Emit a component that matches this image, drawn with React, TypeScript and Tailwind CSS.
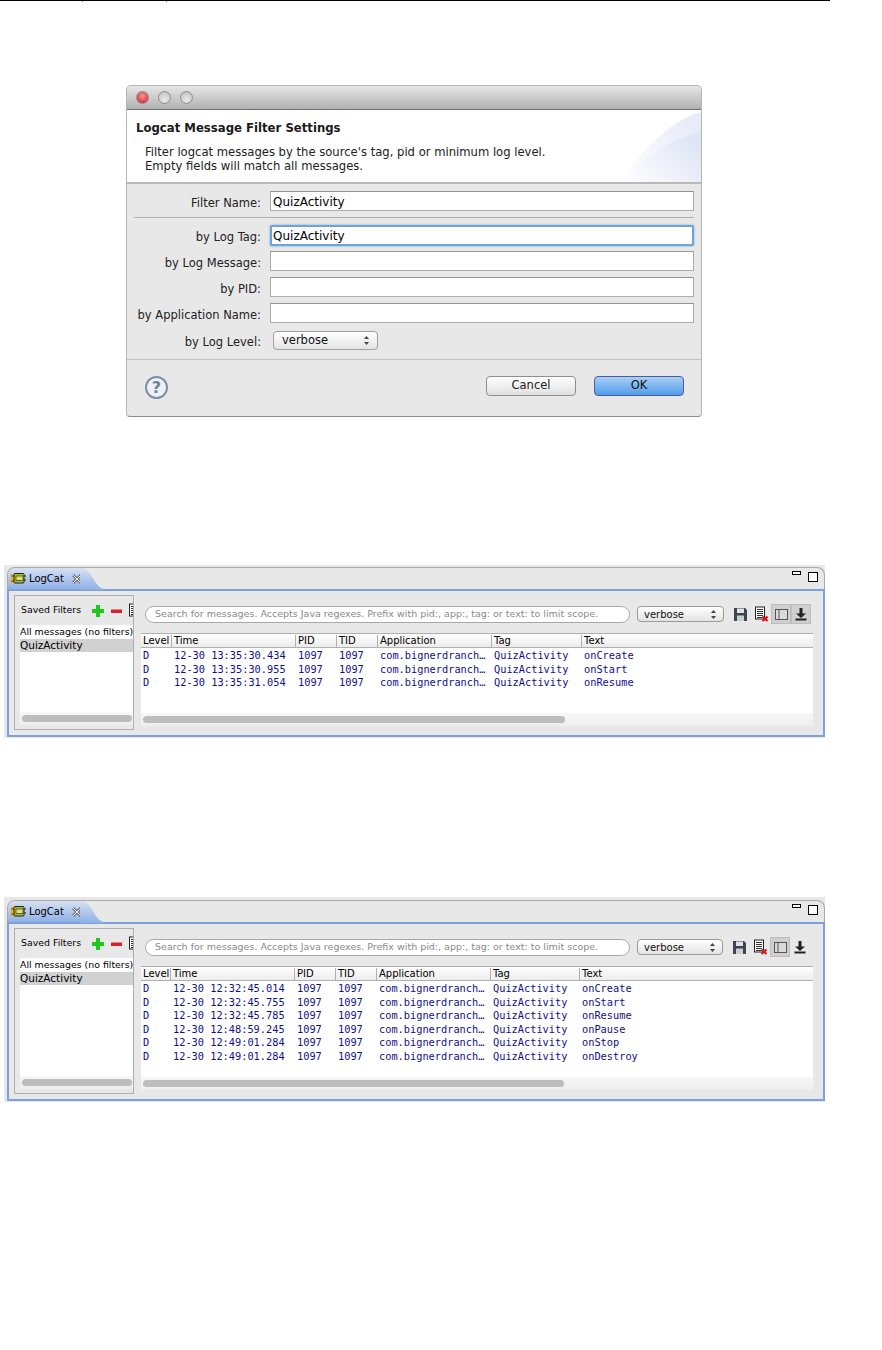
import React from "react";

const sans = "font-['DejaVu_Sans',sans-serif]";
const mono = "font-['DejaVu_Sans_Mono',monospace]";

const Stepper = () => (
    <svg width="7" height="11" viewBox="0 0 7 11" className="shrink-0">
        <path d="M3.5 1 L6 4 H1 Z M3.5 10 L6 7 H1 Z" fill="#444" />
    </svg>
);

const Swoosh = () => (
    <svg width="100" height="72" viewBox="0 0 100 72" className="absolute right-0 top-0">
        <defs>
            <linearGradient id="sw1" x1="0" y1="1" x2="1" y2="0.3">
                <stop offset="0" stopColor="#ffffff" />
                <stop offset="1" stopColor="#dfe5f5" />
            </linearGradient>
            <linearGradient id="sw2" x1="0" y1="1" x2="1" y2="0.4">
                <stop offset="0" stopColor="#ffffff" />
                <stop offset="1" stopColor="#e8ecf8" />
            </linearGradient>
        </defs>
        <path d="M20 72 C40 40 70 10 100 2 V72 Z" fill="url(#sw2)" />
        <path d="M20 72 C45 45 75 27 100 22 V72 Z" fill="url(#sw1)" />
    </svg>
);

const Light = ({ color }: { color: string }) => (
    <span className={`w-[13px] h-[13px] rounded-full border border-[#8f8f8f] ${color}`} />
);

const Field = ({ label, value, focus }: { label: string; value?: string; focus?: boolean }) => (
    <div className="flex items-center">
        <label className="w-[134px] pt-[3px] leading-[14px] text-right text-[11.5px] text-[#222]">{label}</label>
        {focus ? (
            <div className="ml-[9px] flex-1 h-[21px] bg-white rounded-[2px] border-2 border-[#6aa6d8] shadow-[0_0_2px_#5b9bd5] pl-[1px] flex items-center text-[12px] text-black">
                {value}
            </div>
        ) : (
            <div className="ml-[9px] flex-1 h-5 bg-white border border-[#adadad] border-t-[#949494] pl-[2px] pt-[1px] flex items-center text-[12px] text-black">
                {value}
            </div>
        )}
    </div>
);

const Dialog = () => (
    <div className={`${sans} w-[576px] h-[332px] ml-[126px] mt-[83px] flex flex-col rounded-t-[5px] rounded-b-[4px] border border-[#b5b5b5] border-b-[#8a8a8a] bg-[#e8e8e8] overflow-hidden`}>
        <div className="h-[24px] shrink-0 flex items-center gap-[9px] pl-[9px] bg-gradient-to-b from-[#e6e6e6] to-[#b2b2b2] border-b border-[#6f6f6f]">
            <Light color="bg-[radial-gradient(circle_at_50%_35%,#f49a9a,#d8141f)]" />
            <Light color="bg-[radial-gradient(circle_at_50%_70%,#ececec,#b9b9b9)]" />
            <Light color="bg-[radial-gradient(circle_at_50%_70%,#ececec,#b9b9b9)]" />
        </div>
        <div className="relative h-[74px] shrink-0 bg-white border-b-2 border-[#b9b9b9] pl-[9px] pt-[10px] text-black overflow-hidden">
            <Swoosh />
            <h1 className="relative text-[11.7px] font-bold leading-[16px] text-[#1a1a1a]">Logcat Message Filter Settings</h1>
            <p className="relative ml-[9px] mt-[9px] text-[11.6px] leading-[14px] text-[#222]">
                Filter logcat messages by the source's tag, pid or minimum log level.
                <br />
                Empty fields will match all messages.
            </p>
        </div>
        <div className="flex flex-col pr-[7px] pt-[7px] shrink-0">
            <Field label="Filter Name:" value="QuizActivity" />
            <div className="ml-[7px] mt-[6px] h-px bg-[#b0b0b0]" />
            <div className="mt-[7px] flex flex-col gap-[5px]">
                <Field label="by Log Tag:" value="QuizActivity" focus />
                <Field label="by Log Message:" />
            </div>
            <div className="mt-[6px] flex flex-col gap-[6px]">
                <Field label="by PID:" />
                <Field label="by Application Name:" />
            </div>
            <div className="flex items-center mt-[8px]">
                <label className="w-[134px] pt-[3px] leading-[14px] text-right text-[11.5px] text-[#222]">by Log Level:</label>
                <div className="ml-[12px] w-[105px] h-[19px] rounded-[4px] border border-[#a0a0a0] bg-gradient-to-b from-white to-[#e4e4e4] pl-2 pr-[7px] flex items-center justify-between text-[11.5px] text-[#111]">
                    verbose
                    <Stepper />
                </div>
            </div>
        </div>
        <div className="mt-[9px] flex-1 border-t border-[#c2c2c2] flex items-start justify-between pt-[16px] pl-[18px] pr-[17px]">
            <div className="w-[23px] h-[23px] rounded-full border-2 border-[#7d8ea6] bg-[#eef0f3] flex items-center justify-center text-[16px] font-bold leading-none text-[#6f83a0]">
                ?
            </div>
            <div className="flex gap-[18px]">
                <button type="button" className="w-[90px] h-[20px] rounded-[4px] border border-[#8f8f8f] bg-gradient-to-b from-white to-[#e0e0e0] text-[11.5px] text-[#222]">
                    Cancel
                </button>
                <button type="button" className="w-[90px] h-[20px] rounded-[4px] border border-[#4c5e9a] bg-gradient-to-b from-[#a8d0f5] to-[#4f9bea] text-[11.5px] text-[#111]">
                    OK
                </button>
            </div>
        </div>
    </div>
);

const ChipIcon = () => (
    <svg width="15" height="11" viewBox="0 0 15 11" className="shrink-0">
        <rect x="0" y="1" width="4" height="9" fill="#d8c020" />
        <path d="M0 3h3M0 8h3" stroke="#d02020" strokeWidth="1" />
        <rect x="3" y="0.5" width="10" height="9.5" rx="1" fill="#a8c428" stroke="#222" />
        <rect x="5" y="3" width="7" height="4.5" fill="#e4e070" stroke="#333" strokeWidth="0.7" />
        <path d="M13 3h2M13 7h2" stroke="#222" />
    </svg>
);

const CloseIcon = () => (
    <svg width="10" height="10" viewBox="0 0 9 9" className="shrink-0">
        <path d="M1 1 L8 8 M8 1 L1 8" stroke="#333" strokeWidth="2.4" />
        <path d="M1 1 L8 8 M8 1 L1 8" stroke="#fff" strokeWidth="1" />
    </svg>
);

const PlusIcon = () => (
    <svg width="12" height="12" viewBox="0 0 12 12" className="shrink-0">
        <path d="M4 0h4v4h4v4H8v4H4V8H0V4h4z" fill="#1fc81f" />
    </svg>
);

const MinusIcon = () => (
    <svg width="11" height="12" viewBox="0 0 11 12" className="shrink-0">
        <rect y="4.5" width="11" height="3.5" fill="#d8202a" />
    </svg>
);

const DocIcon = ({ x }: { x?: boolean }) => (
    <svg width="13" height="16" viewBox="0 0 13 16" className="shrink-0">
        <rect x="0.5" y="1" width="9" height="12" fill="#fff" stroke="#222" />
        <path d="M2 3.5h6M2 5.5h6M2 7.5h6M2 9.5h6M2 11.5h6" stroke="#333" />
        {x && <path d="M7.5 10.5 L12.5 15 M12.5 10.5 L7.5 15" stroke="#e01010" strokeWidth="2" />}
    </svg>
);

const SaveIcon = () => (
    <svg width="13" height="13" viewBox="0 0 13 13" className="shrink-0">
        <path d="M0 0h11l2 2v11H0z" fill="#3c4650" />
        <rect x="3" y="0.5" width="7" height="4.5" fill="#dfe3e6" />
        <rect x="3" y="7.5" width="7" height="5.5" fill="#c9ced2" />
    </svg>
);

const PaneIcon = () => (
    <svg width="13" height="13" viewBox="0 0 13 13">
        <rect x="0.5" y="1.5" width="12" height="10" fill="#dadada" stroke="#555" />
        <path d="M4 1.5v10" stroke="#555" />
    </svg>
);

const PinIcon = () => (
    <svg width="12" height="13" viewBox="0 0 12 13">
        <path d="M4.5 0h3v5.5H11L6 10 1 5.5h3.5z" fill="#222" />
        <rect x="0.5" y="10.5" width="11" height="2" fill="#222" />
    </svg>
);

const ScrollTrack = ({ thumb, className }: { thumb: string; className: string }) => (
    <div className={`h-[13px] shrink-0 bg-gradient-to-b from-[#f7f7f7] to-[#eeeeee] flex items-center ${className}`}>
        <div className={`h-[7px] rounded-full bg-[#bdbdbd] ${thumb}`} />
    </div>
);

type Row = { time: string; text: string };

const LogCat = ({
    rows,
    pinned,
    height,
    cols,
    thumb,
    marginTop,
    selectWidth,
    topPad,
}: {
    rows: Row[];
    pinned: boolean;
    height: string;
    cols: string;
    thumb: string;
    marginTop: string;
    selectWidth: string;
    topPad: string;
}) => (
    <div className={`${sans} w-[821px] ml-[4px] pl-[3px] bg-[#e8e8e8] flex flex-col ${height} ${marginTop} ${topPad}`}>
        <div className="relative h-[22px] shrink-0 flex rounded-t-[8px] border border-b-0 border-[#a9a9a9] bg-[#e8e8e8]">
            <div className="flex items-center h-full w-[72px] pl-[3px] rounded-tl-[7px] bg-gradient-to-b from-[#d6e1f3] to-[#8fb0e6]">
                <ChipIcon />
                <span className="ml-[3px] text-[10px] text-black">LogCat</span>
                <span className="ml-[8px]">
                    <CloseIcon />
                </span>
            </div>
            <svg width="25" height="22" viewBox="0 0 25 22" className="shrink-0">
                <defs>
                    <linearGradient id="tabcurve" x1="0" y1="0" x2="0" y2="1">
                        <stop offset="0" stopColor="#d6e1f3" />
                        <stop offset="1" stopColor="#8fb0e6" />
                    </linearGradient>
                </defs>
                <path d="M0 0 H3 C12 2 15 21 25 21 V22 H0 Z" fill="url(#tabcurve)" />
            </svg>
            <div className="ml-auto mr-[6px] mt-[3px] flex items-start gap-[7px]">
                <span className="w-[9px] h-[4px] border border-black bg-white" />
                <span className="w-[10px] h-[10px] mt-[1px] border border-black bg-white" />
            </div>
        </div>
        <div className="flex-1 min-h-0 flex border-2 border-[#7ba0dc] bg-[#e8e8e8] pl-[5px] pr-[10px] pt-[4px] pb-[5px] mb-[1px]">
            <div className="w-[120px] shrink-0 border border-[#aeaeae] pb-[4px] flex flex-col overflow-hidden">
                <div className="h-[29px] shrink-0 flex items-center pl-[6px]">
                    <span className="w-[71px] shrink-0 text-[9.4px] text-black">Saved Filters</span>
                    <PlusIcon />
                    <span className="ml-[7px]">
                        <MinusIcon />
                    </span>
                    <span className="ml-[7px]">
                        <DocIcon />
                    </span>
                </div>
                <div className="flex-1 min-h-0 ml-[5px] bg-white text-[10.5px] leading-[13.5px] text-black whitespace-nowrap overflow-hidden">
                    <div className="text-[9.4px]">All messages (no filters)</div>
                    <div className="bg-[#d1d1d1]">QuizActivity</div>
                </div>
                <ScrollTrack thumb="w-[110px] ml-[2px]" className="ml-[5px]" />
            </div>
            <div className="ml-[7px] flex-1 min-w-0 pb-[4px] flex flex-col">
                <div className="h-[38px] shrink-0 flex items-center">
                    <div className="ml-[4px] w-[485px] h-[17px] rounded-full border border-[#a8a8a8] bg-white pl-[9px] flex items-center text-[9.5px] text-[#8a8a8a] whitespace-nowrap overflow-hidden">
                        Search for messages. Accepts Java regexes. Prefix with pid:, app:, tag: or text: to limit scope.
                    </div>
                    <div className={`ml-[7px] ${selectWidth} h-[16px] rounded-[4px] border border-[#9a9a9a] bg-gradient-to-b from-white to-[#e4e4e4] pl-[6px] pr-[6px] flex items-center justify-between text-[10px] text-[#111]`}>
                        verbose
                        <Stepper />
                    </div>
                    <div className="ml-[10px]">
                        <SaveIcon />
                    </div>
                    <div className="ml-[8px]">
                        <DocIcon x />
                    </div>
                    <div className="ml-[3px] w-[20px] h-[20px] bg-[#cfcfcf] border border-[#bdbdbd] flex items-center justify-center">
                        <PaneIcon />
                    </div>
                    <div className={`w-[20px] h-[20px] flex items-center justify-center ${pinned ? "bg-[#cfcfcf] border border-[#bdbdbd]" : ""}`}>
                        <PinIcon />
                    </div>
                </div>
                <div className="flex-1 min-h-0 flex flex-col bg-white">
                    <div className={`h-[15px] shrink-0 grid ${cols} items-center border-y border-[#b0b0b0] bg-gradient-to-b from-white to-[#ececec] text-[10px] text-black`}>
                        {["Level", "Time", "PID", "TID", "Application", "Tag", "Text"].map((h, i) => (
                            <span key={h} className={`pl-[2px] leading-[12px] ${i > 0 ? "border-l border-[#b0b0b0]" : ""}`}>
                                {h}
                            </span>
                        ))}
                    </div>
                    <div className={`${mono} flex-1 min-h-0 pt-[1px] text-[10.3px] leading-[13.5px] text-[#10108a]`}>
                        {rows.map((r, i) => (
                            <div key={i} className={`grid ${cols} pl-[2px] whitespace-nowrap`}>
                                <span>D</span>
                                <span className="pl-[1px]">{r.time}</span>
                                <span className="pl-[1px]">1097</span>
                                <span className="pl-[1px]">1097</span>
                                <span className="pl-[1px]">com.bignerdranch…</span>
                                <span className="pl-[1px]">QuizActivity</span>
                                <span className="pl-[1px]">{r.text}</span>
                            </div>
                        ))}
                    </div>
                    <ScrollTrack thumb={thumb} className="" />
                </div>
            </div>
        </div>
    </div>
);

const first: Row[] = [
    { time: "12-30 13:35:30.434", text: "onCreate" },
    { time: "12-30 13:35:30.955", text: "onStart" },
    { time: "12-30 13:35:31.054", text: "onResume" },
];

const second: Row[] = [
    { time: "12-30 12:32:45.014", text: "onCreate" },
    { time: "12-30 12:32:45.755", text: "onStart" },
    { time: "12-30 12:32:45.785", text: "onResume" },
    { time: "12-30 12:48:59.245", text: "onPause" },
    { time: "12-30 12:49:01.284", text: "onStop" },
    { time: "12-30 12:49:01.284", text: "onDestroy" },
];

export default function App() {
    return (
        <div className="w-[882px] h-[1350px] bg-white overflow-hidden">
            <div className="w-[830px] h-[2px] border-t border-black grid grid-cols-[83px_84px_1fr]">
                <span className="border-r border-[#888]" />
                <span className="border-r border-[#888]" />
            </div>
            <Dialog />
            <LogCat
                rows={first}
                pinned
                height="h-[173px]"
                marginTop="mt-[148px]"
                topPad="pt-[2px]"
                cols="grid-cols-[30px_124px_41px_41px_114px_90px_1fr]"
                thumb="w-[422px] ml-[2px]"
                selectWidth="w-[87px]"
            />
            <LogCat
                rows={second}
                pinned={false}
                height="h-[205px]"
                marginTop="mt-[159px]"
                topPad="pt-[3px]"
                cols="grid-cols-[29px_124px_41px_41px_114px_89px_1fr]"
                thumb="w-[421px] ml-[2px]"
                selectWidth="w-[86px]"
            />
        </div>
    );
}
